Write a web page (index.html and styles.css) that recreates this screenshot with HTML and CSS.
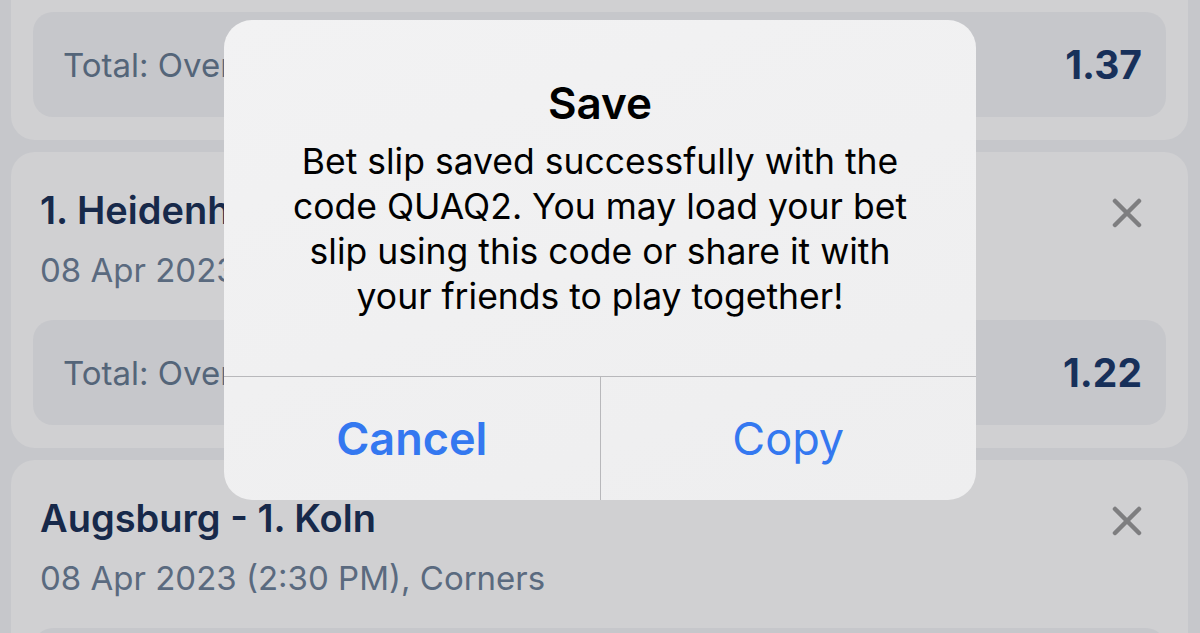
FILE: index.html
```html
<!DOCTYPE html>
<html lang="en">
<head>
    <meta charset="UTF-8">
    <meta name="viewport" content="width=device-width, initial-scale=1.0">
    <title>Bet Slip</title>
    <link rel="stylesheet" href="styles.css">
</head>
<body>

    <div class="slip-list">
        <div class="bet-card">
            <div class="bet-head">
                <div>
                    <div class="match-name">Union Berlin - Freiburg</div>
                    <div class="match-date">08 Apr 2023 (2:30 PM), Corners</div>
                </div>
                <button class="remove-btn" type="button">
                    <svg width="30" height="30" viewBox="0 0 30 30"><path d="M3 3 L27 27 M27 3 L3 27" stroke="currentColor" stroke-width="4.5" stroke-linecap="round"/></svg>
                </button>
            </div>
            <div class="pick-row">
                <span class="pick-name">Total: Over 8.5</span>
                <span class="pick-odds">1.37</span>
            </div>
        </div>

        <div class="bet-card">
            <div class="bet-head">
                <div>
                    <div class="match-name">1. Heidenheim - Hamburger SV</div>
                    <div class="match-date">08 Apr 2023 (2:30 PM), Corners</div>
                </div>
                <button class="remove-btn" type="button">
                    <svg width="30" height="30" viewBox="0 0 30 30"><path d="M3 3 L27 27 M27 3 L3 27" stroke="currentColor" stroke-width="4.5" stroke-linecap="round"/></svg>
                </button>
            </div>
            <div class="pick-row">
                <span class="pick-name">Total: Over 9.5</span>
                <span class="pick-odds">1.22</span>
            </div>
        </div>

        <div class="bet-card">
            <div class="bet-head">
                <div>
                    <div class="match-name">Augsburg - 1. Koln</div>
                    <div class="match-date">08 Apr 2023 (2:30 PM), Corners</div>
                </div>
                <button class="remove-btn" type="button">
                    <svg width="30" height="30" viewBox="0 0 30 30"><path d="M3 3 L27 27 M27 3 L3 27" stroke="currentColor" stroke-width="4.5" stroke-linecap="round"/></svg>
                </button>
            </div>
            <div class="pick-row">
                <span class="pick-name">Total: Over 8.5</span>
                <span class="pick-odds">1.30</span>
            </div>
        </div>
    </div>

    <!-- save confirmation -->
    <div class="alert">
        <div class="alert-body">
            <div class="alert-title">Save</div>
            <div class="alert-text">Bet slip saved successfully with the code QUAQ2. You may load your bet slip using this code or share it with your friends to play together!</div>
        </div>
        <div class="alert-actions">
            <button class="alert-btn cancel" type="button">Cancel</button>
            <button class="alert-btn" type="button">Copy</button>
        </div>
    </div>

</body>
</html>
```

FILE: styles.css
```css
body {
    margin: 0;
    height: 633px;
    overflow: hidden;
    background-color: #c6c7cb;
    font-family: Inter, "Noto Sans", sans-serif;
}
.slip-list {
    display: flex;
    flex-direction: column;
    gap: 12px;
    margin-top: -156px;
    padding: 0 12px 0 11px;
}
.bet-card {
    background-color: #d0d0d2;
    border-radius: 24px;
    padding: 22px;
    height: 252px;
}
.bet-head {
    display: flex;
    justify-content: space-between;
    align-items: flex-start;
    padding: 14px 24px 0 7px;
}
.match-name {
    font-size: 38px;
    font-weight: 600;
    line-height: 44px;
    white-space: nowrap;
    color: #17294a;
}
.match-date {
    font-size: 33px;
    line-height: 40px;
    margin-top: 18px;
    color: #5a6a7f;
}
.remove-btn {
    background: none;
    border: none;
    padding: 0;
    margin-top: 10px;
    color: #7e7e80;
    cursor: pointer;
}
.pick-row {
    display: flex;
    justify-content: space-between;
    align-items: center;
    margin-top: 30px;
    height: 105px;
    padding: 0 24px 0 30px;
    border-radius: 20px;
    background-color: #c6c7cb;
}
.pick-name {
    font-size: 33px;
    color: #546579;
}
.pick-odds {
    font-size: 39px;
    font-weight: 700;
    color: #17305a;
}

.alert {
    position: absolute;
    top: 20px;
    left: 224px;
    width: 752px;
    height: 480px;
    display: flex;
    flex-direction: column;
    border-radius: 28px;
    overflow: hidden;
    background: linear-gradient(160deg, #f2f2f3, #eeeeef);
}
.alert-body {
    flex: 1;
    padding: 59px 54px 0;
    text-align: center;
    color: #000;
}
.alert-title {
    font-size: 44px;
    font-weight: 600;
    line-height: 48px;
}
.alert-text {
    margin-top: 12px;
    font-size: 35.5px;
    line-height: 45px;
}
.alert-actions {
    display: flex;
    height: 123px;
    border-top: 1px solid #b8b8bb;
}
.alert-btn {
    flex: 1;
    background: none;
    border: none;
    font-family: inherit;
    font-size: 45px;
    color: #3478f0;
    cursor: pointer;
}
.alert-btn + .alert-btn {
    border-left: 1px solid #b8b8bb;
}
.cancel {
    font-weight: 600;
}
```
